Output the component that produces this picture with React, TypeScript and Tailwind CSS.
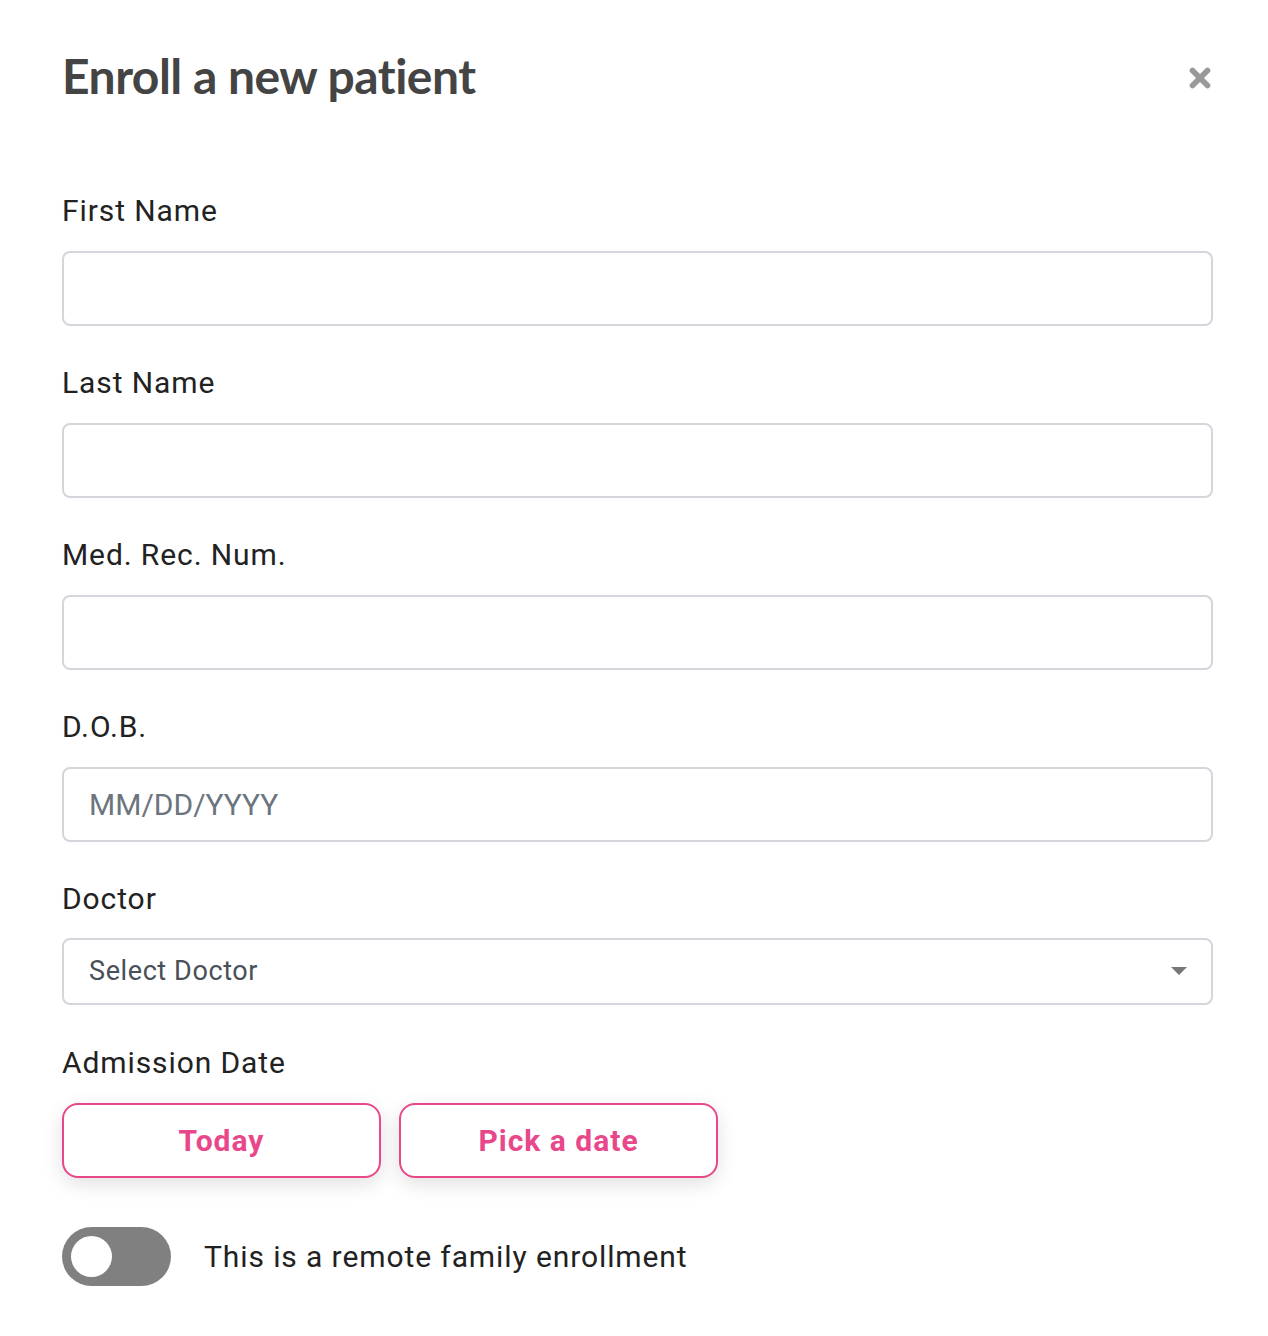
import { X } from "lucide-react";

const Field = ({ label, placeholder }: { label: string; placeholder?: string }) => (
  <div className="flex flex-col">
    <label className="h-[40px] text-[30px] leading-[40px] tracking-[0.9px] text-[#222]">{label}</label>
    <input
      placeholder={placeholder}
      className="mt-[20px] h-[75px] w-full rounded-[8px] border-2 border-[#d3d6db] bg-white px-[25px] text-[30px] text-[#333] outline-none placeholder:text-[#6c757d]"
    />
  </div>
);

export default function App() {
  return (
    <div className="min-h-[1336px] w-[1268px] bg-white font-['Roboto',sans-serif]">
      <div className="pt-[46px] pr-[55px] pl-[62px]">
        {/* Header */}
        <div className="flex items-center justify-between">
          <h1 className="font-['Lato',sans-serif] text-[48px] leading-[60px] font-bold tracking-[-0.5px] text-[#444]">
            Enroll a new patient
          </h1>
          <X className="-mr-[2px] mt-[3px] h-[30px] w-[30px] text-[#999]" strokeWidth={4.5} />
        </div>

        {/* Form */}
        <div className="mt-[85px] flex flex-col gap-[37px]">
          <Field label="First Name" />
          <Field label="Last Name" />
          <Field label="Med. Rec. Num." />
          <Field label="D.O.B." placeholder="MM/DD/YYYY" />

          <div className="flex flex-col">
            <label className="h-[40px] text-[30px] leading-[40px] tracking-[0.9px] text-[#222]">Doctor</label>
            <div className="mt-[19px] flex h-[67px] items-center justify-between rounded-[8px] border-2 border-[#d3d6db] bg-white pr-[24px] pl-[25px]">
              <span className="text-[27px] tracking-[0.6px] text-[#495057]">Select Doctor</span>
              <svg width="16" height="10" viewBox="0 0 16 10">
                <path d="M0 0h16L8 8z" fill="#777" />
              </svg>
            </div>
          </div>

          <div className="mt-[1px] flex flex-col">
            <label className="h-[40px] text-[30px] leading-[40px] tracking-[0.9px] text-[#222]">Admission Date</label>
            <div className="mt-[20px] flex gap-[18px]">
              <button className="h-[75px] w-[319px] rounded-[16px] border-2 border-[#e8488a] bg-white text-[30px] font-bold tracking-[1px] text-[#e8488a] shadow-[0_6px_20px_rgba(0,0,0,0.12)]">
                Today
              </button>
              <button className="h-[75px] w-[319px] rounded-[16px] border-2 border-[#e8488a] bg-white text-[30px] font-bold tracking-[1px] text-[#e8488a] shadow-[0_6px_20px_rgba(0,0,0,0.12)]">
                Pick a date
              </button>
            </div>
          </div>

          <div className="mt-[12px] flex items-center gap-[33px]">
            <div className="flex h-[59px] w-[109px] items-center rounded-full bg-[#808080] px-[9px]">
              <div className="h-[41px] w-[41px] rounded-full bg-white" />
            </div>
            <span className="text-[30px] tracking-[0.9px] text-[#222]">This is a remote family enrollment</span>
          </div>
        </div>
      </div>
    </div>
  );
}
